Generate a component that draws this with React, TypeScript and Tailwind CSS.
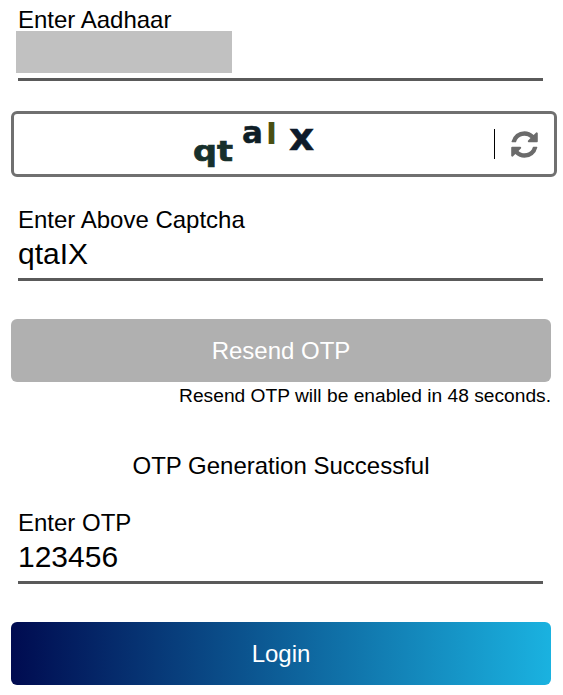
import React from 'react'

const Field: React.FC<{ label: string; value?: string; cover?: boolean }> = ({ label, value, cover }) => (
  <div className="relative ml-[7px] w-[525px] border-b-[3px] border-[#5a5a5a]">
    <div className="text-[24px] leading-[26px] text-black">{label}</div>
    <div className="h-[45px] text-[30px] leading-[42px] text-black">{value}</div>
    {cover && <div className="absolute left-[-2px] top-[24px] h-[42px] w-[216px] bg-[#c1c1c1]" />}
  </div>
)

export default function App() {
  return (
    <div className="h-[695px] w-[563px] overflow-hidden bg-white px-[11px] pt-[7px] font-['Liberation_Sans',Arial,sans-serif]">
      <Field label="Enter Aadhaar" cover />

      <div className="mt-[30px] flex h-[66px] w-[546px] items-center rounded-[6px] border-[3px] border-[#707070]">
        <div className="flex flex-1 justify-center pl-[8px]">
          <svg width="130" height="60" viewBox="0 0 130 60" className="block">
            <g fontFamily="'DejaVu Sans', sans-serif" fontWeight="700">
              <text x="0" y="47" fontSize="29" fill="#17302c" stroke="#17302c" strokeWidth="0.7" textLength="40" lengthAdjust="spacingAndGlyphs">qt</text>
              <text x="49" y="29" fontSize="31" fill="#0e1e26" stroke="#0e1e26" strokeWidth="0.5">a</text>
              <text x="73" y="30" fontSize="29" fill="#4a4f12" textLength="11" lengthAdjust="spacingAndGlyphs">l</text>
              <text x="96" y="36" fontSize="39" fill="#0e1a2a" stroke="#0e1a2a" strokeWidth="0.5">x</text>
            </g>
          </svg>
        </div>
        <div className="h-[30px] w-px bg-black" />
        <svg viewBox="0 0 1792 1792" className="ml-[14px] mr-[14px] h-[31px] w-[31px] fill-[#6b6b6b]">
          <path d="M1639 1056q0 5-1 7-64 268-268 434.5t-478 166.5q-146 0-282.5-55t-243.5-157l-129 129q-19 19-45 19t-45-19-19-45v-448q0-26 19-45t45-19h448q26 0 45 19t19 45-19 45l-137 137q71 66 161 102t187 36q134 0 250-65t186-179q11-17 53-117 8-23 30-23h192q13 0 22.5 9.5t9.5 22.5zm25-800v448q0 26-19 45t-45 19h-448q-26 0-45-19t-19-45 19-45l138-138q-148-137-349-137-134 0-250 65t-186 179q-11 17-53 117-8 23-30 23h-199q-13 0-22.5-9.5t-9.5-22.5v-7q65-268 270-434.5t480-166.5q146 0 284 55.5t245 156.5l130-129q19-19 45-19t45 19 19 45z" />
        </svg>
      </div>

      <div className="mt-[30px]">
        <Field label="Enter Above Captcha" value="qtaIX" />
      </div>

      <button className="mt-[38px] block h-[63px] w-[540px] rounded-[6px] bg-[#b0b0b0] text-[24px] text-white">
        Resend OTP
      </button>
      <p className="mt-[3px] w-[540px] text-right text-[19.2px] leading-[21px] text-black">
        Resend OTP will be enabled in 48 seconds.
      </p>

      <p className="mt-[46px] w-[540px] text-center text-[24px] leading-[28px] text-black">OTP Generation Successful</p>

      <div className="mt-[30px]">
        <Field label="Enter OTP" value="123456" />
      </div>

      <button className="mt-[38px] block h-[63px] w-[540px] rounded-[6px] bg-linear-to-r/srgb from-[#000b50] to-[#1ab2e0] text-[24px] text-white">
        Login
      </button>
    </div>
  )
}
